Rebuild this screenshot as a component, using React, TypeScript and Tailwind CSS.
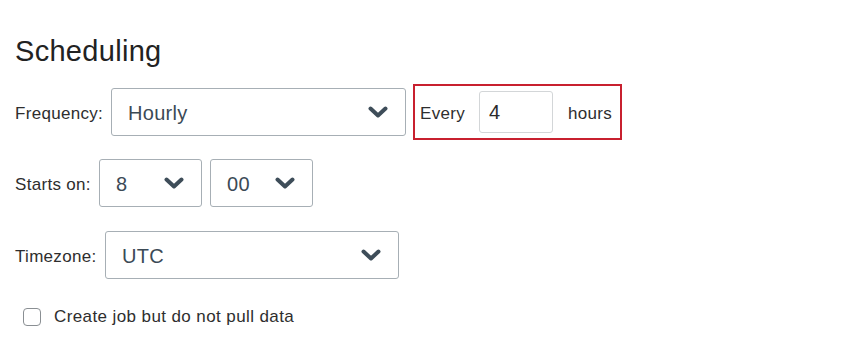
import React, { useState } from 'react';

const Chevron: React.FC = () => (
  <svg width="20" height="12" viewBox="0 0 20 12" className="shrink-0">
    <path d="M2.5 2.5 L10 9.5 L17.5 2.5" fill="none" stroke="#3e4d59" strokeWidth="4" strokeLinecap="round" strokeLinejoin="round" />
  </svg>
);

interface SelectBoxProps {
  value: string;
  width: string;
}

const SelectBox: React.FC<SelectBoxProps> = ({ value, width }) => (
  <div className={`${width} h-[48px] flex items-center justify-between pl-[16px] pr-[17px] border border-[#a7afb5] rounded-[3px] bg-white`}>
    <span className="pt-[1px] text-[20px] tracking-[0.3px] text-[#3b4a56]">{value}</span>
    <Chevron />
  </div>
);

const App: React.FC = () => {
  const [every, setEvery] = useState('4');
  const [noPull, setNoPull] = useState(false);

  return (
    <div className="w-[850px] h-[350px] bg-white text-[#2e2e2e] font-['Liberation_Sans',Arial,sans-serif] pl-[15px]">
      <h1 className="pt-[33px] text-[29px] leading-[36px] tracking-[0.3px] font-normal text-[#222]">Scheduling</h1>

      <div className="mt-[15px] flex items-center h-[56px]">
        <span className="pt-[3px] text-[17px] tracking-[0.3px] w-[88px] whitespace-nowrap">Frequency:</span>
        <div className="ml-[8px]">
          <SelectBox value="Hourly" width="w-[295px]" />
        </div>
        <div className="ml-[7px] h-[56px] w-[209px] border-2 border-[#c8202f] flex items-center pl-[5px]">
          <span className="pt-[3px] text-[17px] tracking-[0.3px] w-[47px]">Every</span>
          <input
            value={every}
            onChange={(e) => setEvery(e.target.value)}
            className="ml-[12px] w-[74px] h-[42px] border border-[#d3d6d8] rounded-[3px] pl-[9px] text-[20px] text-[#2b2b2b] outline-none"
          />
          <span className="pt-[3px] ml-[15px] text-[17px] tracking-[0.3px]">hours</span>
        </div>
      </div>

      <div className="mt-[19px] flex items-center">
        <span className="pt-[3px] text-[17px] tracking-[0.3px] w-[76px] whitespace-nowrap">Starts on:</span>
        <div className="ml-[8px] flex gap-[8px]">
          <SelectBox value="8" width="w-[103px]" />
          <SelectBox value="00" width="w-[103px]" />
        </div>
      </div>

      <div className="mt-[24px] flex items-center">
        <span className="pt-[3px] text-[17px] tracking-[0.3px] w-[82px] whitespace-nowrap">Timezone:</span>
        <div className="ml-[8px]">
          <SelectBox value="UTC" width="w-[294px]" />
        </div>
      </div>

      <label className="mt-[29px] ml-[8px] flex items-center h-[18px] cursor-pointer">
        <input
          type="checkbox"
          checked={noPull}
          onChange={(e) => setNoPull(e.target.checked)}
          className="appearance-none w-[18px] h-[18px] border border-[#8a8f93] rounded-[4px] bg-white checked:bg-[#3e4d59]"
        />
        <span className="ml-[13px] text-[17px] tracking-[0.4px]">Create job but do not pull data</span>
      </label>
    </div>
  );
};

export default App;
